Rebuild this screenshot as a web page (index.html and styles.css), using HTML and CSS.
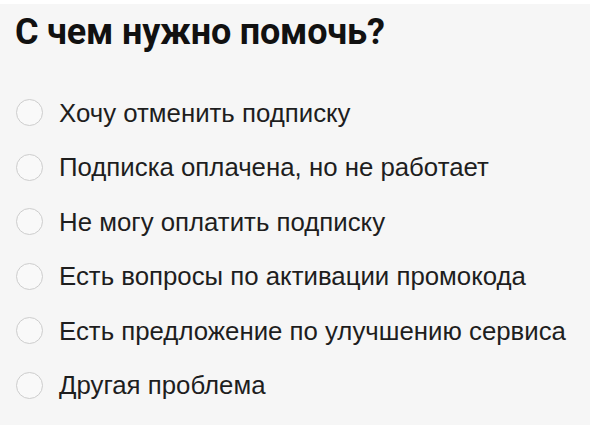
FILE: index.html
```html
<!DOCTYPE html>
<html lang="ru">
<head>
<meta charset="utf-8">
<link rel="stylesheet" href="styles.css">
</head>
<body>
<div class="panel">
  <h1 class="title">С чем нужно помочь?</h1>
  <ul class="options">
    <li class="option"><span class="radio"></span><span class="label">Хочу отменить подписку</span></li>
    <li class="option"><span class="radio"></span><span class="label">Подписка оплачена, но не работает</span></li>
    <li class="option"><span class="radio"></span><span class="label">Не могу оплатить подписку</span></li>
    <li class="option"><span class="radio"></span><span class="label">Есть вопросы по активации промокода</span></li>
    <li class="option"><span class="radio"></span><span class="label">Есть предложение по улучшению сервиса</span></li>
    <li class="option"><span class="radio"></span><span class="label">Другая проблема</span></li>
  </ul>
</div>
</body>
</html>
```

FILE: styles.css
```css
html, body {
  margin: 0;
  padding: 0;
  background: #ffffff;
}

.panel {
  width: 590px;
  height: 421px;
  margin-top: 4px;
  background: #f6f6f6;
  box-sizing: border-box;
  padding: 5px 0 0 15px;
}

.title {
  margin: 0;
  font-family: Roboto, "Open Sans", sans-serif;
  font-weight: 700;
  font-size: 36px;
  line-height: 46px;
  color: #111111;
  letter-spacing: -0.2px;
}

.options {
  list-style: none;
  margin: 42.5px 0 0 0;
  padding: 0;
  display: flex;
  flex-direction: column;
  gap: 24.6px;
}

.option {
  display: flex;
  align-items: center;
  gap: 16px;
  height: 30px;
}

.radio {
  flex: none;
  width: 27px;
  height: 27px;
  margin-left: 1px;
  border-radius: 50%;
  border: 1.5px solid #cdcdcd;
  background: #f9f9f9;
  box-sizing: border-box;
}

.label {
  font-family: "Liberation Sans", Arial, sans-serif;
  font-size: 25.8px;
  color: #1e1e1e;
  line-height: 30px;
}
```
